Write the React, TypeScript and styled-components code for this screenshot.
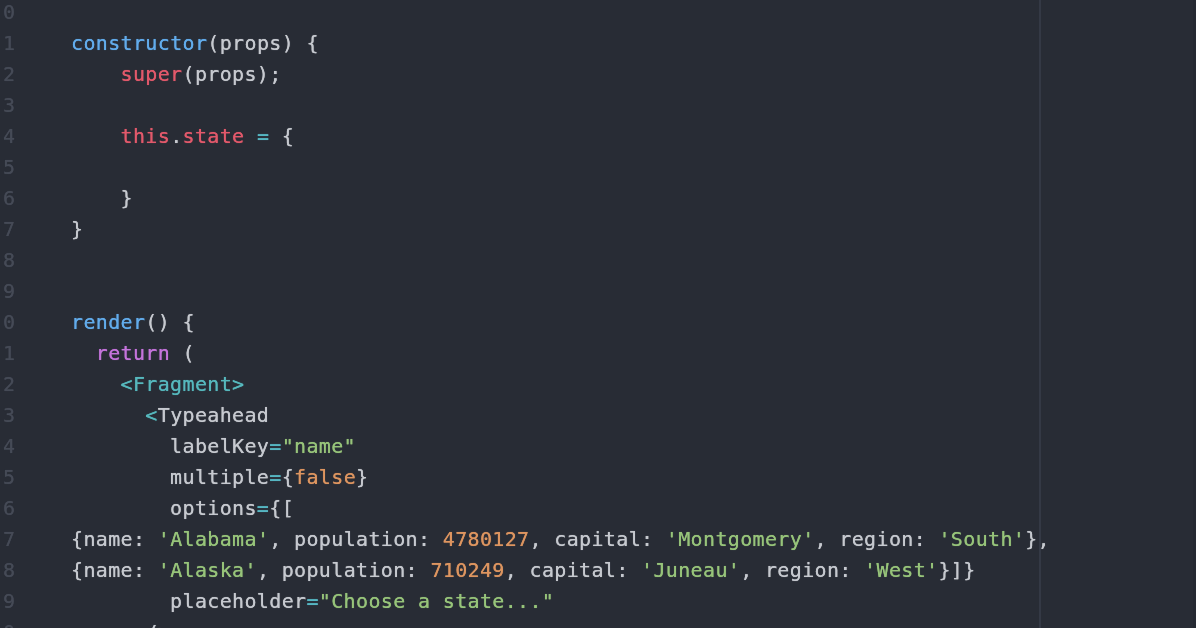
import React from "react";
import styled, { createGlobalStyle } from "styled-components";

const Global = createGlobalStyle`
  html, body { margin: 0; padding: 0; background: #282c35; }
  body { overflow: hidden; }
`;

const Screen = styled.div`
  position: relative;
  width: 1196px;
  height: 628px;
  overflow: hidden;
  background: #282c35;
`;

const WrapGuide = styled.div`
  position: absolute;
  top: 0;
  bottom: 0;
  left: 1039px;
  width: 2px;
  background: #343945;
`;

const RightEdge = styled.div`
  position: absolute;
  top: 0;
  bottom: 0;
  right: 0;
  width: 3px;
  background: #252932;
`;

const Editor = styled.div`
  position: relative;
  display: flex;
  flex-direction: column;
  margin-top: -3px;
  font-family: "DejaVu Sans Mono", "Liberation Mono", monospace;
  font-size: 20px;
  letter-spacing: 0.35px;
  line-height: 31px;
  color: #c6c9cf;
  text-shadow: 0 0 0.7px currentColor;
  filter: blur(0.3px);
`;

const Row = styled.div`
  display: flex;
  height: 31px;
  white-space: pre;
`;

const Gutter = styled.div`
  width: 68px;
  padding-left: 3px;
  flex: none;
  color: #454a56;
`;

const Code = styled.div<{ $indent: number }>`
  padding-left: ${(p) => p.$indent * 12.39}px;
`;

type Kind = "p" | "fn" | "kw" | "ret" | "op" | "str" | "num" | "tag";

const colors: Record<Kind, string> = {
  p: "#c6c9cf",
  fn: "#62acec",
  kw: "#e2596b",
  ret: "#c574dc",
  op: "#56b6c2",
  str: "#97c47a",
  num: "#dd9560",
  tag: "#56b8bd",
};

const Tok = styled.span<{ $k: Kind }>`
  color: ${(p) => colors[p.$k]};
`;

type Line = { indent: number; toks: [Kind, string][] };

const lines: Line[] = [
  { indent: 0, toks: [] },
  { indent: 0, toks: [["fn", "constructor"], ["p", "(props) {"]] },
  { indent: 4, toks: [["kw", "super"], ["p", "(props);"]] },
  { indent: 0, toks: [] },
  { indent: 4, toks: [["kw", "this"], ["p", "."], ["kw", "state"], ["p", " "], ["op", "="], ["p", " {"]] },
  { indent: 0, toks: [] },
  { indent: 4, toks: [["p", "}"]] },
  { indent: 0, toks: [["p", "}"]] },
  { indent: 0, toks: [] },
  { indent: 0, toks: [] },
  { indent: 0, toks: [["fn", "render"], ["p", "() {"]] },
  { indent: 2, toks: [["ret", "return"], ["p", " ("]] },
  { indent: 4, toks: [["tag", "<Fragment>"]] },
  { indent: 6, toks: [["tag", "<"], ["p", "Typeahead"]] },
  { indent: 8, toks: [["p", "labelKey"], ["op", "="], ["str", "\"name\""]] },
  { indent: 8, toks: [["p", "multiple"], ["op", "="], ["p", "{"], ["num", "false"], ["p", "}"]] },
  { indent: 8, toks: [["p", "options"], ["op", "="], ["p", "{["]] },
  {
    indent: 0,
    toks: [
      ["p", "{name: "], ["str", "'Alabama'"], ["p", ", population: "], ["num", "4780127"],
      ["p", ", capital: "], ["str", "'Montgomery'"], ["p", ", region: "], ["str", "'South'"], ["p", "},"],
    ],
  },
  {
    indent: 0,
    toks: [
      ["p", "{name: "], ["str", "'Alaska'"], ["p", ", population: "], ["num", "710249"],
      ["p", ", capital: "], ["str", "'Juneau'"], ["p", ", region: "], ["str", "'West'"], ["p", "}]}"],
    ],
  },
  { indent: 8, toks: [["p", "placeholder"], ["op", "="], ["str", "\"Choose a state...\""]] },
  { indent: 6, toks: [["p", "/>"]] },
];

export default function App() {
  return (
    <Screen>
      <Global />
      <WrapGuide />
      <RightEdge />
      <Editor>
        {lines.map((l, i) => (
          <Row key={i}>
            <Gutter>{i % 10}</Gutter>
            <Code $indent={l.indent}>
              {l.toks.map(([k, t], j) => (
                <Tok key={j} $k={k}>
                  {t}
                </Tok>
              ))}
            </Code>
          </Row>
        ))}
      </Editor>
    </Screen>
  );
}
